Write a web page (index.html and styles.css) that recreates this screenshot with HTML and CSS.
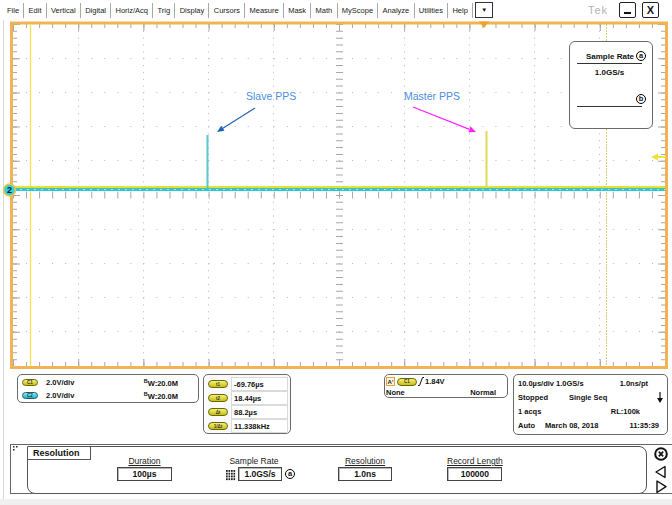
FILE: index.html
```html
<!DOCTYPE html>
<html>
<head>
<meta charset="utf-8">
<link rel="stylesheet" href="styles.css">
</head>
<body>
<div class="app">
  <nav class="menubar">
    <span class="mi">File</span><span class="mi">Edit</span><span class="mi">Vertical</span><span class="mi">Digital</span><span class="mi">Horiz/Acq</span><span class="mi">Trig</span><span class="mi">Display</span><span class="mi">Cursors</span><span class="mi">Measure</span><span class="mi">Mask</span><span class="mi">Math</span><span class="mi">MyScope</span><span class="mi">Analyze</span><span class="mi">Utilities</span><span class="mi">Help</span>
    <span class="mdrop">▼</span>
    <span class="tek">Tek</span>
    <span class="wbtn wmin"><span class="minbar"></span></span>
    <span class="wbtn wclose">X</span>
  </nav>

  <div class="screen">
    <svg class="scope" width="672" height="350" viewBox="0 0 672 350">
      <g class="grid-dots">
        <path d="M78.5 4V346M143.5 4V346M208.5 4V346M273.5 4V346M404.5 4V346M469.5 4V346M534.5 4V346M599.5 4V346" stroke-dasharray="1 5.84"/>
        <path d="M13 38.5H665M13 72.5H665M13 106.5H665M13 140.5H665M13 209.5H665M13 243.5H665M13 277.5H665M13 311.5H665" stroke-dasharray="1 12.04"/>
      </g>
      <g class="grid-ticks">
        <path d="M339.5 4V346" stroke-width="7" stroke-dasharray="1 5.84"/>
        <path d="M13 175H665" stroke-width="7" stroke-dasharray="1 12.04"/>
        <path d="M15 4V346M663 4V346" stroke-width="4" stroke-dasharray="1 5.84"/>
        <path d="M16.5 4V346M661.5 4V346" stroke-width="7" stroke-dasharray="1 33.2"/>
        <path d="M13 6H665M13 344H665" stroke-width="4" stroke-dasharray="1 12.04"/>
        <path d="M13 7.5H665M13 342.5H665" stroke-width="7" stroke-dasharray="1 64.2"/>
      </g>
      <rect class="frame" x="11.5" y="3" width="655" height="344.5"/>
      <path class="cur-solid" d="M30.5 4.5V346"/>
      <path class="cur-dot" d="M606.5 4.5V346"/>
      <rect class="tr-yel" x="13" y="166" width="652" height="2"/>
      <rect class="tr-cyan" x="13" y="168" width="652" height="3"/>
      <path class="tr-speck" d="M13 169.5H665"/>
      <rect class="pulse-cyan" x="206.5" y="115" width="2" height="53"/>
      <rect class="pulse-yel" x="485.5" y="111" width="2" height="57"/>
      <polygon class="trig-pos" points="479,1.5 489,1.5 484,8"/>
      <polygon class="trig-lvl" points="651,137 658,133.5 658,136 666,136 666,138 658,138 658,140.5"/>
      <circle class="ch-mark" cx="9.5" cy="170" r="6"/>
      <text class="ch-num" x="9.5" y="173.3">2</text>
      <text class="ann" x="246" y="80">Slave PPS</text>
      <path class="arr-blue" d="M255 88L222.9 108.3"/>
      <polygon class="arr-blue-h" points="217,112 224.5,110.8 221.3,105.7"/>
      <text class="ann" x="404" y="80">Master PPS</text>
      <path class="arr-mag" d="M413 87L469.5 109.4"/>
      <polygon class="arr-mag-h" points="476,112 468.4,112.2 470.6,106.6"/>
    </svg>

    <div class="srbox">
      <div class="sr-title"><span>Sample Rate</span><span class="circ">a</span></div>
      <div class="sr-line"></div>
      <div class="sr-val">1.0GS/s</div>
      <div class="sr-b"><span class="circ">b</span></div>
      <div class="sr-line"></div>
    </div>
  </div>

  <div class="status">
    <div class="box chbox">
      <div class="chrow"><span class="pill">C1</span><span class="chval">2.0V/div</span><span class="bw"><span class="bw-b">B</span>W:20.0M</span></div>
      <div class="chrow"><span class="pill cyan">C2</span><span class="chval">2.0V/div</span><span class="bw"><span class="bw-b">B</span>W:20.0M</span></div>
    </div>
    <div class="box curbox">
      <div class="currow"><span class="pill wide">t1</span><span class="cell">-69.76µs</span></div>
      <div class="currow"><span class="pill wide">t2</span><span class="cell">18.44µs</span></div>
      <div class="currow"><span class="pill wide">Δt</span><span class="cell">88.2µs</span></div>
      <div class="currow"><span class="pill wide">1/Δt</span><span class="cell">11.338kHz</span></div>
    </div>
    <div class="box trigbox">
      <div class="trow"><span class="abox">A'</span><span class="pill wide">C1</span><svg class="slope" width="6" height="9" viewBox="0 0 6 9"><path d="M0 8.5H1.5L4.5 0.5H6"/></svg><span class="tval">1.84V</span></div>
      <div class="trow second"><span>None</span><span class="tnorm">Normal</span></div>
    </div>
    <div class="box acqbox">
      <div class="acqrow"><span>10.0µs/div 1.0GS/s</span><span class="a-r1">1.0ns/pt</span></div>
      <div class="acqrow"><span class="w51">Stopped</span><span>Single Seq</span><svg class="a-arrow" width="6" height="11" viewBox="0 0 6 11"><path d="M3 0V7"/><polygon points="0,6 6,6 3,11"/></svg></div>
      <div class="acqrow"><span>1 acqs</span><span class="a-r3">RL:100k</span></div>
      <div class="acqrow"><span class="w27">Auto</span><span>March 08, 2018</span><span class="a-r4">11:35:39</span></div>
    </div>
  </div>

  <div class="panel">
    <div class="grip"><svg width="5" height="5" viewBox="0 0 5 5"><rect x="0" y="0" width="1.5" height="1.5"/><rect x="3" y="0" width="1.5" height="1.5"/><rect x="0" y="3" width="1.5" height="1.5"/></svg></div>
    <div class="inner">
      <div class="tab">Resolution</div>
      <div class="field f-dur">
        <span class="flabel ul">Duration</span>
        <span class="fbox w55">100µs</span>
      </div>
      <div class="sgroup">
        <div class="field">
          <span class="flabel">Sample Rate</span>
          <div class="frow">
            <svg class="gridico" width="10" height="11" viewBox="0 0 10 11"><defs><pattern id="gd" width="2.5" height="2.75" patternUnits="userSpaceOnUse"><rect width="1.7" height="1.9" fill="#222"/></pattern></defs><rect width="10" height="11" fill="url(#gd)"/></svg>
            <span class="fbox w44">1.0GS/s</span>
          </div>
        </div>
        <span class="circ big">a</span>
      </div>
      <div class="field f-res">
        <span class="flabel ul">Resolution</span>
        <span class="fbox w54">1.0ns</span>
      </div>
      <div class="field f-rec">
        <span class="flabel ul">Record Length</span>
        <span class="fbox w55">100000</span>
      </div>
    </div>
    <div class="side">
      <svg width="15" height="48" viewBox="0 0 15 48">
        <circle cx="7" cy="7" r="5.8" class="sx"/>
        <path d="M4.8 4.6L9.2 9.4M9.2 4.6L4.8 9.4" class="sxx"/>
        <polygon points="11,19.5 11,30.5 2,25" class="tri"/>
        <polygon points="3,34 3,45.5 12,39.7" class="tri"/>
      </svg>
    </div>
  </div>
  <div class="footer"></div>
</div>
</body>
</html>
```

FILE: styles.css
```css
* { box-sizing: border-box; }
html, body { margin: 0; padding: 0; }
body {
  width: 672px;
  height: 505px;
  overflow: hidden;
  background: #fff;
  font-family: "Liberation Sans", Arial, sans-serif;
  color: #111;
}
.app {
  position: relative;
  width: 672px;
  height: 505px;
  background: linear-gradient(90deg, #fff 0, #fff 3px, #d8d8d8 3px, #d8d8d8 4px, transparent 4px);
}

/* menu bar */
.menubar {
  display: flex;
  align-items: center;
  height: 20px;
  padding-left: 2.75px;
  font-size: 7.5px;
  color: #222;
  background: #fff;
}
.mi {
  height: 15px;
  line-height: 15px;
  padding: 0 4.25px;
  border-right: 1px solid #a8a8a8;
  white-space: nowrap;
}
.mdrop {
  margin-left: 2px;
  width: 18px;
  height: 16px;
  border: 1px solid #333;
  display: flex;
  align-items: center;
  justify-content: center;
  font-size: 6px;
  color: #111;
}
.tek {
  margin-left: auto;
  font-size: 11px;
  letter-spacing: 1px;
  color: #b4b4b4;
}
.wbtn {
  width: 17px;
  height: 16px;
  border: 1.5px solid #222;
  border-radius: 2px;
  display: flex;
  align-items: center;
  justify-content: center;
  font-size: 11px;
  font-weight: bold;
  color: #111;
}
.wmin { margin-left: 11px; }
.wclose { margin-left: 6px; margin-right: 13px; }
.minbar {
  width: 7px;
  height: 2px;
  background: #111;
  margin-top: 5px;
}

/* scope screen */
.screen {
  position: relative;
  height: 350px;
}
.scope { display: block; }
.grid-dots path { stroke: #b8b8b8; stroke-width: 1; fill: none; }
.grid-ticks path { stroke: #a8a8a8; fill: none; }
.frame { fill: none; stroke: #f2b452; stroke-width: 3; }
.cur-solid { stroke: #f2e24e; stroke-width: 1.3; fill: none; }
.cur-dot { stroke: #a89a00; stroke-width: 1; stroke-dasharray: 1 2; fill: none; }
.tr-yel { fill: #e2de3a; }
.tr-cyan { fill: #2ec6d6; }
.tr-speck { stroke: #d8e870; stroke-width: 1; stroke-dasharray: 2 5; fill: none; }
.pulse-cyan { fill: #5cc6cc; }
.pulse-yel { fill: #e2da56; }
.trig-pos { fill: #f0a030; }
.trig-lvl { fill: #f0e040; }
.ch-mark { fill: #38cfe0; stroke: #f2c640; stroke-width: 1.5; }
.ch-num { font-family: "Liberation Sans", Arial, sans-serif; font-size: 9px; font-weight: bold; text-anchor: middle; fill: #111; }
.ann { font-family: "Liberation Sans", Arial, sans-serif; font-size: 10.5px; fill: #4a8fe0; }
.arr-blue { stroke: #1e64b4; stroke-width: 1.2; fill: none; }
.arr-blue-h { fill: #1e64b4; }
.arr-mag { stroke: #ff20ff; stroke-width: 1.2; fill: none; }
.arr-mag-h { fill: #ff20ff; }

.srbox {
  position: absolute;
  left: 569px;
  top: 21px;
  width: 84px;
  height: 88px;
  border: 1px solid #6a6a6a;
  border-radius: 6px;
  background: #fff;
  font-size: 8px;
  font-weight: bold;
}
.sr-title {
  display: flex;
  justify-content: flex-end;
  align-items: center;
  gap: 2px;
  height: 10px;
  margin-top: 9px;
  padding-right: 6px;
}
.sr-line {
  width: 65px;
  height: 1px;
  margin-left: 7px;
  margin-top: 2px;
  background: #333;
}
.sr-val {
  height: 10px;
  line-height: 10px;
  margin-top: 4px;
  text-align: center;
  padding-left: 0;
  width: 79px;
}
.sr-b {
  display: flex;
  justify-content: flex-end;
  height: 10px;
  margin-top: 16px;
  padding-right: 6px;
}
.circ {
  display: inline-flex;
  align-items: center;
  justify-content: center;
  width: 10px;
  height: 10px;
  border: 1px solid #000;
  border-radius: 50%;
  font-size: 7.5px;
  font-weight: bold;
  line-height: 1;
  padding-bottom: 1px;
}

/* status row */
.status {
  display: flex;
  align-items: flex-start;
  height: 74px;
  padding-top: 4px;
  padding-left: 17px;
  font-size: 7.5px;
  font-weight: bold;
}
.box {
  border: 1px solid #6a6a6a;
  border-radius: 5px;
  background: #fff;
}
.chbox { width: 182px; height: 29px; margin-right: 4px; padding-top: 1px; }
.curbox { width: 88px; height: 60px; padding-top: 2px; background: #fafafa; }
.trigbox { width: 124px; height: 24px; margin-left: 93px; padding: 1px 0 0 1px; }
.acqbox { width: 155px; height: 61px; margin-left: 5px; padding-top: 1px; }

.pill {
  flex: none;
  width: 16px;
  height: 7px;
  border: 1px solid #6a6600;
  border-radius: 4px;
  background: linear-gradient(#f4f07a, #c8c012);
  display: flex;
  align-items: center;
  justify-content: center;
  font-size: 4.5px;
  font-weight: bold;
  color: #333;
}
.pill.cyan {
  border-color: #0e6070;
  background: linear-gradient(#8ceaf2, #22b2c8);
}
.pill.wide { width: 20px; height: 8px; }

.chrow {
  display: flex;
  align-items: center;
  height: 13px;
  padding-left: 4px;
}
.chval { margin-left: 8px; }
.bw { margin-left: auto; margin-right: 20px; }
.bw-b { font-size: 5.5px; vertical-align: 3px; }

.currow {
  display: flex;
  align-items: center;
  height: 14px;
  padding-left: 4px;
}
.currow .pill { margin-right: 3px; }
.cell {
  flex: none;
  width: 57px;
  height: 14px;
  background: #fff;
  border: 1px solid #dadada;
  padding-left: 2px;
  display: flex;
  align-items: center;
}

.trow {
  display: flex;
  align-items: center;
  height: 11px;
}
.trow.second { height: 10px; }
.abox {
  flex: none;
  width: 9px;
  height: 9px;
  border: 1px solid #e8a040;
  background: #fff6e4;
  font-size: 6px;
  display: flex;
  align-items: center;
  justify-content: center;
  margin-right: 2px;
}
.trow .pill { margin-right: 1px; }
.slope { flex: none; }
.slope path { stroke: #111; stroke-width: 1; fill: none; }
.tval { margin-left: 1px; }
.tnorm { margin-left: auto; margin-right: 11px; }

.acqrow {
  display: flex;
  align-items: center;
  height: 14px;
  padding-left: 4px;
  white-space: nowrap;
}
.w51 { flex: none; width: 51px; }
.w27 { flex: none; width: 27px; }
.a-r1 { margin-left: auto; margin-right: 19px; }
.a-r3 { margin-left: auto; margin-right: 27px; }
.a-r4 { margin-left: auto; margin-right: 8px; }
.a-arrow { margin-left: auto; margin-right: 4px; }
.a-arrow path { stroke: #111; stroke-width: 1.2; }
.a-arrow polygon { fill: #111; }

/* resolution panel */
.panel {
  display: flex;
  height: 50px;
  margin-left: 10px;
  border: 1px solid #666;
  border-right: none;
}
.grip {
  flex: none;
  width: 16px;
  padding: 1px 0 0 2px;
}
.grip svg { display: block; }
.grip rect { fill: #222; }
.inner {
  flex: 1;
  display: flex;
  align-items: flex-start;
  margin: 1px 0 -1px 0;
  border: 1px solid #555;
  border-radius: 0 8px 8px 8px;
  background: #fff;
}
.tab {
  flex: none;
  width: 63px;
  height: 13px;
  line-height: 12px;
  padding-left: 5px;
  border-right: 1px solid #555;
  border-bottom: 1px solid #555;
  font-size: 9px;
  font-weight: bold;
}
.field {
  display: flex;
  flex-direction: column;
  align-items: center;
  margin-top: 9px;
}
.f-dur { margin-left: 26px; }
.f-res { margin-left: 43px; }
.f-rec { margin-left: 55px; }
.sgroup {
  display: flex;
  align-items: flex-end;
  margin-left: 54px;
}
.sgroup .circ { margin-left: 3px; margin-bottom: 2px; }
.circ.big { width: 10px; height: 10px; font-size: 7.5px; }
.flabel {
  height: 10px;
  line-height: 10px;
  font-size: 8.5px;
  color: #222;
  white-space: nowrap;
}
.flabel.ul { text-decoration: underline; text-underline-offset: 1px; }
.frow {
  display: flex;
  align-items: flex-end;
  gap: 2px;
}
.gridico { display: block; margin-bottom: 0; }
.fbox {
  display: flex;
  align-items: center;
  justify-content: center;
  height: 14px;
  margin-top: 1px;
  border: 1px solid #444;
  box-shadow: inset 1px 1px 0 #b8b8b8;
  background: #fff;
  font-size: 8.5px;
  font-weight: bold;
}
.w55 { width: 55px; }
.w54 { width: 54px; }
.w44 { width: 44px; }
.side {
  flex: none;
  width: 25px;
  padding: 2px 0 0 7px;
}
.side svg { display: block; }
.sx { fill: #fff; stroke: #111; stroke-width: 2; }
.sxx { stroke: #111; stroke-width: 1.6; fill: none; }
.tri { fill: #fff; stroke: #111; stroke-width: 1.4; stroke-linejoin: round; }
.footer {
  height: 6px;
  margin-top: 5px;
  background: #efefef;
}
```
